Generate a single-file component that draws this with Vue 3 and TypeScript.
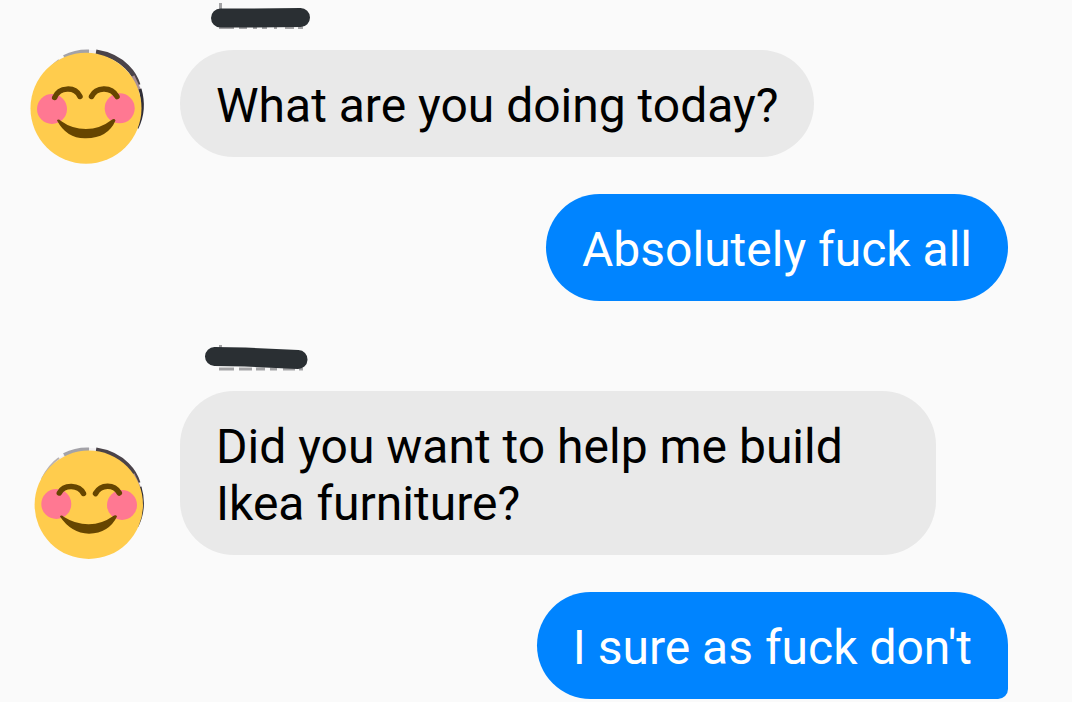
<script setup lang="ts">
interface Face {
  cx: number
  cy: number
  r: number
  cheeks: { x: number; y: number }[]
  eyes: string
  mouth: string
}

interface Message {
  id: number
  from: 'them' | 'me'
  text: string
  face?: Face
  scribble?: string
  traces?: string
  last?: boolean
}

const messages: Message[] = [
  {
    id: 1,
    from: 'them',
    text: 'What are you doing today?',
    face: {
      cx: 50,
      cy: 59.3,
      r: 55.5,
      cheeks: [{ x: 16, y: 60 }, { x: 83.7, y: 59.3 }],
      eyes: 'M18.7 48.500C23 38 39 37 44 47.500M55.500 47.500C60 38 75 37 81 47.500',
      mouth: 'M21 71.500Q22 69.500 25 72Q36 80 50 80Q64 80 75.500 71Q78.500 69 79.500 71.500Q72 89 50 89.300Q31 90 21 71.500Z',
    },
    scribble: 'M45.500 18H70L125.500 17.500',
    traces: 'M45.500 3V10M44 27.500H59M64 27.500H72M78 27.500H82M87 27.500H92M99 27.500H102M110 27.500H119M123 27.500H128',
  },
  { id: 2, from: 'me', text: 'Absolutely fuck all' },
  {
    id: 3,
    from: 'them',
    text: 'Did you want to help me build Ikea furniture?',
    face: {
      cx: 52.8,
      cy: 57.8,
      r: 54.2,
      cheeks: [{ x: 20.3, y: 57 }, { x: 86, y: 58 }],
      eyes: 'M23.300 46C28 37 43 37.500 47.500 46.500M59.500 46.500C65 37 78 37 83.300 46',
      mouth: 'M24 69.500Q25 67.500 28 70Q40 77.500 53 77.300Q66 77 76.500 69.500Q80 67 81 69.500Q73 86 53 86.800Q35 86 24 69.500Z',
    },
    scribble: 'M39.500 15.500L70 16L123 18.500',
    traces: 'M45.500 4V10M44 28H59M64 28H77M81 28H90M95 28H102M108 28H120M124 28H128',
  },
  { id: 4, from: 'me', text: "I sure as fuck don't", last: true },
]
</script>

<template>
  <main class="chat">
    <article v-for="m in messages" :key="m.id" class="message" :class="[m.from, { last: m.last }]">
      <svg v-if="m.scribble" class="name" viewBox="0 0 140 50" role="img" aria-label="Hidden name">
        <path :d="m.traces" fill="none" stroke="#a3a3a5" stroke-width="3" />
        <path :d="m.scribble" fill="none" stroke="#2a2f33" stroke-width="19" stroke-linecap="round" stroke-linejoin="round" />
      </svg>
      <div class="line">
        <svg v-if="m.face" class="avatar" viewBox="0 0 108 108" role="img" aria-label="Smiling face">
          <circle cx="54" cy="54" r="53" fill="#f1eff1" />
          <path d="M6 32Q13 18 23 11" fill="none" stroke="#b9b2b2" stroke-width="2" />
          <path d="M28 8Q40 2 53 2.500" fill="none" stroke="#a3a2a8" stroke-width="4" />
          <path d="M60 3Q79 6 91 18Q99 26 102 36" fill="none" stroke="#4a4349" stroke-width="5" />
          <path d="M97 27L104 42" fill="none" stroke="#a88f96" stroke-width="3" />
          <path d="M104 40Q110 61 101 79" fill="none" stroke="#302e37" stroke-width="3" />
          <circle :cx="m.face.cx" :cy="m.face.cy" :r="m.face.r" fill="#ffcc4d" />
          <circle v-for="c in m.face.cheeks" :key="c.x" :cx="c.x" :cy="c.y" r="15" fill="#ff7892" />
          <path :d="m.face.eyes" fill="none" stroke="#664500" stroke-width="5.500" stroke-linecap="round" />
          <path :d="m.face.mouth" fill="#664500" />
        </svg>
        <p class="bubble">{{ m.text }}</p>
      </div>
    </article>
  </main>
</template>

<style>
html,
body {
  margin: 0;
  background: #fafafa;
}
</style>

<style scoped>
.chat {
  display: flex;
  flex-direction: column;
  font-family: Roboto, "Noto Sans", sans-serif;
  font-size: 48px;
  line-height: 57px;
}

.message {
  display: flex;
  flex-direction: column;
}

.them {
  padding: 0 136px 0 36px;
}

.me {
  align-items: flex-end;
  padding: 0 64px;
}

.them + .me {
  margin-top: 37px;
}

.me + .them {
  margin-top: 40px;
}

.name {
  display: block;
  width: 140px;
  height: 50px;
  margin-left: 139px;
}

.line {
  display: flex;
  align-items: flex-end;
  gap: 36px;
}

.avatar {
  flex: none;
  width: 108px;
  height: 108px;
  margin-top: -1px;
  overflow: visible;
}

.bubble {
  margin: 0;
  padding: 27px 36px 23px;
  border-radius: 54px;
  background: #e9e9e9;
  color: #000;
}

.me .bubble {
  background: #0084ff;
  color: #fff;
}

.last .bubble {
  border-bottom-right-radius: 10px;
}
</style>
